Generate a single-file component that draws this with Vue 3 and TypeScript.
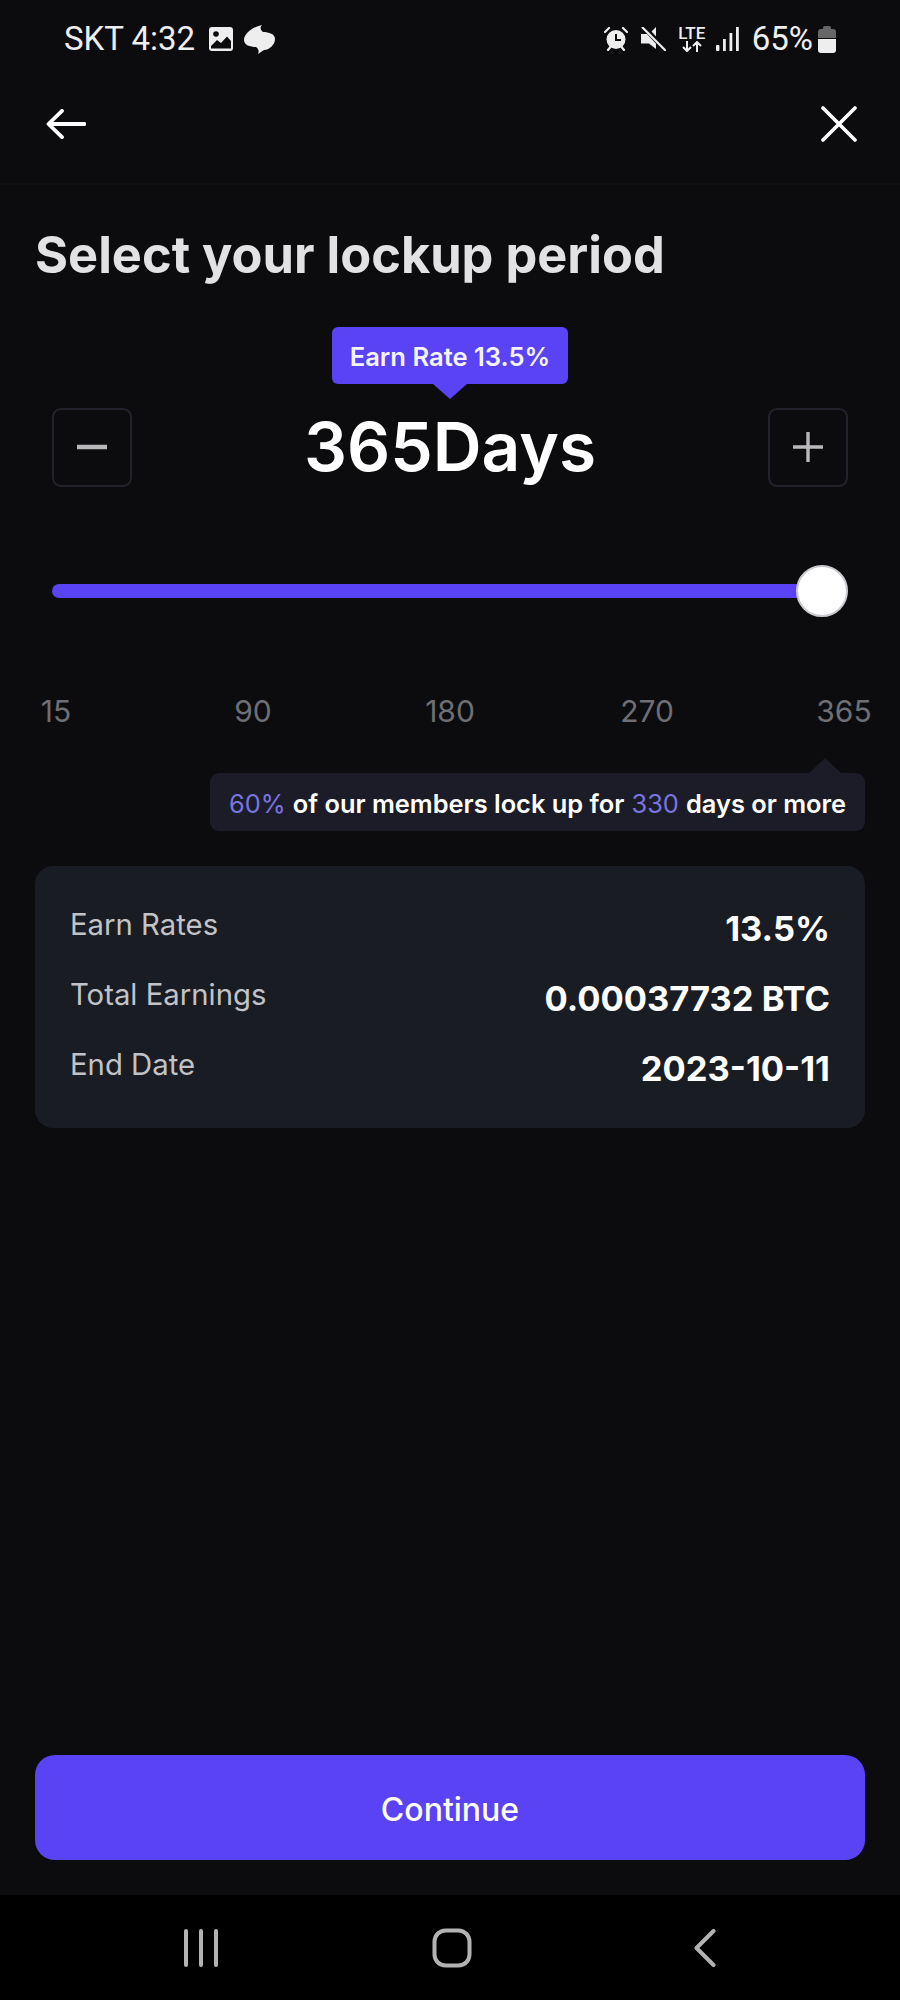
<script setup lang="ts">
const ticks: string[] = ['15', '90', '180', '270', '365']
const rows: { label: string; value: string }[] = [
  { label: 'Earn Rates', value: '13.5%' },
  { label: 'Total Earnings', value: '0.00037732 BTC' },
  { label: 'End Date', value: '2023-10-11' },
]
</script>

<template>
  <div class="screen">
    <div class="status">
      <div class="status-left">
        <span class="status-text">SKT 4:32</span>
        <svg class="ic-photo" width="24" height="24" viewBox="0 0 24 24">
          <rect x="0" y="0" width="24" height="24" rx="3" fill="#eee" />
          <circle cx="7" cy="7" r="2.8" fill="#0c0c0f" />
          <path d="M2 21.5 V19 L8 13 L12 16 L18 9.5 L22 14 V21.5 Z" fill="#0c0c0f" />
        </svg>
        <svg class="ic-cloud" width="31" height="29" viewBox="0 0 31 29">
          <path d="M0 15 C0 9 8 2 18 0 C16 2 16 5 19 7 C25 7 31 9 31 14 C31 20 25 25 20 25 C18 26 16 28 14 29 C15 27 15 24 12 22 C6 22 0 20 0 15 Z" fill="#eee" />
        </svg>
      </div>
      <div class="status-right">
        <svg class="ic-alarm" width="24" height="24" viewBox="0 0 24 24">
          <circle cx="12" cy="12.5" r="9.5" fill="#eee" />
          <path d="M12 7 V13 H17" stroke="#0c0c0f" stroke-width="2" fill="none" />
          <path d="M1 5 L5 1 M23 5 L19 1 M4 23 L6 20.5 M20 23 L18 20.5" stroke="#eee" stroke-width="2.2" stroke-linecap="round" />
        </svg>
        <svg class="ic-mute" width="25" height="24" viewBox="0 0 25 24">
          <path d="M15 0 V22 L8 16.5 H0 V7 H8 Z" fill="#eee" />
          <path d="M2 -1 L26 25" stroke="#0c0c0f" stroke-width="5" />
          <path d="M1 0 L25 24" stroke="#eee" stroke-width="2.2" />
        </svg>
        <div class="lte">
          <span class="lte-text">LTE</span>
          <svg width="22" height="11" viewBox="0 0 22 11">
            <path d="M6 0 V10 M2 6 L6 10 L10 6 M16 11 V1 M12 5 L16 1 L20 5" stroke="#eee" stroke-width="2" fill="none" />
          </svg>
        </div>
        <svg class="ic-signal" width="23" height="24" viewBox="0 0 23 24">
          <rect x="0" y="18" width="3.4" height="6" rx="1" fill="#eee" />
          <rect x="7" y="12" width="2.8" height="12" fill="#eee" />
          <rect x="13.5" y="6" width="2.8" height="18" fill="#eee" />
          <rect x="20" y="0" width="2.8" height="24" fill="#eee" />
        </svg>
        <span class="status-text pct">65%</span>
        <svg class="ic-batt" width="18" height="27" viewBox="0 0 18 27">
          <path d="M5 2 Q5 0 7 0 H11 Q13 0 13 2 V3 H15 Q18 3 18 6 V12 H0 V6 Q0 3 3 3 H5 Z" fill="#666" />
          <path d="M0 13 H18 V24 Q18 27 15 27 H3 Q0 27 0 24 Z" fill="#eee" />
        </svg>
      </div>
    </div>

    <header class="topbar">
      <svg width="40" height="30" viewBox="0 0 40 30">
        <path d="M38.5 15 H3 M16 1.8 L2.5 15 L16 28.2" stroke="#fff" stroke-width="3.8" fill="none" stroke-linecap="round" stroke-linejoin="round" />
      </svg>
      <svg width="36" height="36" viewBox="0 0 36 36">
        <path d="M2 2 L34 34 M34 2 L2 34" stroke="#fff" stroke-width="3.6" stroke-linecap="round" />
      </svg>
    </header>

    <main class="content">
      <h1 class="title">Select your lockup period</h1>

      <div class="bubble-wrap">
        <div class="bubble">Earn Rate 13.5%<i class="bubble-arrow"></i></div>
      </div>

      <div class="stepper">
        <button class="step-btn" type="button">
          <svg width="32" height="32" viewBox="0 0 32 32"><path d="M1 16 H31" stroke="#b9b9bd" stroke-width="4.5" /></svg>
        </button>
        <div class="days">365Days</div>
        <button class="step-btn" type="button">
          <svg width="32" height="32" viewBox="0 0 32 32"><path d="M1 16 H31 M16 1 V31" stroke="#b9b9bd" stroke-width="3.4" /></svg>
        </button>
      </div>

      <div class="slider">
        <div class="track"></div>
        <div class="knob"></div>
      </div>

      <div class="ticks">
        <span v-for="t in ticks" :key="t" class="tick"><span class="tick-label">{{ t }}</span></span>
      </div>

      <div class="hint-wrap">
        <div class="hint">
          <i class="hint-arrow"></i>
          <span class="accent">60%</span> of our members lock up for <span class="accent">330</span> days or more
        </div>
      </div>

      <section class="card">
        <div v-for="r in rows" :key="r.label" class="row">
          <span class="row-label">{{ r.label }}</span>
          <span class="row-value">{{ r.value }}</span>
        </div>
      </section>

      <button class="continue" type="button">Continue</button>
    </main>

    <nav class="navbar">
      <svg class="nav-menu" width="36" height="38" viewBox="0 0 36 38">
        <path d="M3 2 V36 M18 2 V36 M33 2 V36" stroke="#b3b3b3" stroke-width="4" stroke-linecap="round" />
      </svg>
      <svg class="nav-home" width="40" height="40" viewBox="0 0 40 40">
        <rect x="2.5" y="2.5" width="35" height="35" rx="11" fill="none" stroke="#b3b3b3" stroke-width="4" />
      </svg>
      <svg class="nav-back" width="22" height="38" viewBox="0 0 22 38">
        <path d="M19.5 2 L2.5 19 L19.5 36" stroke="#b3b3b3" stroke-width="4" fill="none" stroke-linecap="round" stroke-linejoin="round" />
      </svg>
    </nav>
  </div>
</template>

<style>
html,
body {
  background: #0c0c0f;
}
</style>

<style scoped>
.screen {
  width: 900px;
  height: 2000px;
  display: flex;
  flex-direction: column;
  background: #0c0c0f;
  font-family: Inter, "Liberation Sans", sans-serif;
  color: #fff;
}

.status {
  height: 78px;
  flex: none;
  display: flex;
  justify-content: space-between;
  align-items: center;
  padding: 0 64px;
}

.status-left,
.status-right {
  display: flex;
  align-items: center;
}

.status-text {
  font-family: Roboto, "Liberation Sans", sans-serif;
  font-size: 33px;
  color: #eee;
  line-height: 36px;
  white-space: nowrap;
}

.ic-photo { margin-left: 14px; }
.ic-cloud { margin-left: 11px; }
.ic-mute { margin-left: 13px; }

.lte {
  margin-left: 13px;
  width: 26px;
  display: flex;
  flex-direction: column;
  align-items: center;
  gap: 1px;
}

.lte-text {
  font-family: Roboto, "Liberation Sans", sans-serif;
  font-size: 17px;
  line-height: 14px;
  font-weight: 500;
  color: #eee;
}

.ic-signal { margin-left: 11px; }
.pct { margin-left: 13px; }
.ic-batt { margin-left: 5px; }

.topbar {
  height: 107px;
  flex: none;
  box-sizing: border-box;
  display: flex;
  justify-content: space-between;
  align-items: center;
  padding: 0 43px 13px 46px;
  border-bottom: 2px solid #111114;
}

.content {
  flex: 1;
  min-height: 0;
  display: flex;
  flex-direction: column;
  padding: 0 35px;
}

.title {
  margin: 42px 0 0;
  font-size: 50.5px;
  line-height: 56px;
  font-weight: 700;
  color: #e2e2e4;
  white-space: nowrap;
}

.bubble-wrap {
  display: flex;
  justify-content: center;
  margin-top: 44px;
}

.bubble {
  position: relative;
  width: 236px;
  height: 57px;
  box-sizing: border-box;
  padding-top: 1px;
  border-radius: 6px;
  background: #5a43f5;
  display: flex;
  align-items: center;
  justify-content: center;
  font-size: 25.6px;
  font-weight: 600;
  color: #f4f3ff;
  white-space: nowrap;
}

.bubble-arrow {
  position: absolute;
  left: 50%;
  top: 100%;
  margin-left: -17px;
  border-left: 17px solid transparent;
  border-right: 17px solid transparent;
  border-top: 15px solid #5a43f5;
}

.stepper {
  display: flex;
  justify-content: space-between;
  align-items: center;
  margin: 23px 17px 0;
}

.step-btn {
  width: 80px;
  height: 79px;
  padding: 0;
  box-sizing: border-box;
  background: transparent;
  border: 2px solid #22232b;
  border-radius: 9px;
  display: flex;
  align-items: center;
  justify-content: center;
}

.days {
  font-size: 67.6px;
  line-height: 80px;
  font-weight: 600;
  color: #fff;
  white-space: nowrap;
}

.slider {
  position: relative;
  margin: 78px 17px 0;
  height: 52px;
  display: flex;
  align-items: center;
}

.track {
  width: 100%;
  height: 14px;
  border-radius: 7px;
  background: #5a43f5;
}

.knob {
  position: absolute;
  right: 0;
  top: 0;
  width: 52px;
  height: 52px;
  box-sizing: border-box;
  border-radius: 50%;
  background: #fff;
  border: 2px solid #c9c9cf;
}

.ticks {
  display: flex;
  justify-content: space-between;
  margin: 76px -1px 0;
}

.tick {
  width: 44px;
  display: flex;
  justify-content: center;
}

.tick-label {
  font-size: 30px;
  line-height: 36px;
  color: #6e6f75;
  white-space: nowrap;
}

.hint-wrap {
  display: flex;
  justify-content: flex-end;
  margin-top: 44px;
}

.hint {
  position: relative;
  width: 655px;
  height: 58px;
  box-sizing: border-box;
  padding-top: 2px;
  border-radius: 9px;
  background: #1c1c28;
  display: flex;
  align-items: center;
  justify-content: center;
  gap: 0 .28em;
  font-size: 25.4px;
  font-weight: 600;
  color: #fff;
  white-space: nowrap;
}

.hint-arrow {
  position: absolute;
  right: 24px;
  bottom: 100%;
  border-left: 16px solid transparent;
  border-right: 16px solid transparent;
  border-bottom: 15px solid #1c1c28;
}

.accent {
  color: #7a74e0;
  font-weight: 400;
}

.card {
  margin-top: 35px;
  height: 262px;
  box-sizing: border-box;
  padding: 41px 35px 0;
  border-radius: 18px;
  background: #191c23;
  display: flex;
  flex-direction: column;
  gap: 28px;
}

.row {
  height: 42px;
  display: flex;
  justify-content: space-between;
  align-items: flex-start;
}

.row-label {
  font-size: 29.3px;
  line-height: 36px;
  color: #c2c3c7;
}

.row-value {
  font-size: 34.5px;
  line-height: 40px;
  margin-top: 2px;
  font-weight: 700;
  color: #fff;
}

.continue {
  margin-top: auto;
  margin-bottom: 35px;
  flex: none;
  height: 105px;
  padding: 4px 0 0;
  border: 0;
  border-radius: 20px;
  background: #5a43f5;
  color: #fff;
  font-family: inherit;
  font-size: 32px;
  font-weight: 500;
}

.navbar {
  flex: none;
  height: 105px;
  background: #000;
  display: flex;
  align-items: center;
  padding-left: 183px;
}

.nav-home { margin-left: 213px; }
.nav-back { margin-left: 222px; }
</style>
